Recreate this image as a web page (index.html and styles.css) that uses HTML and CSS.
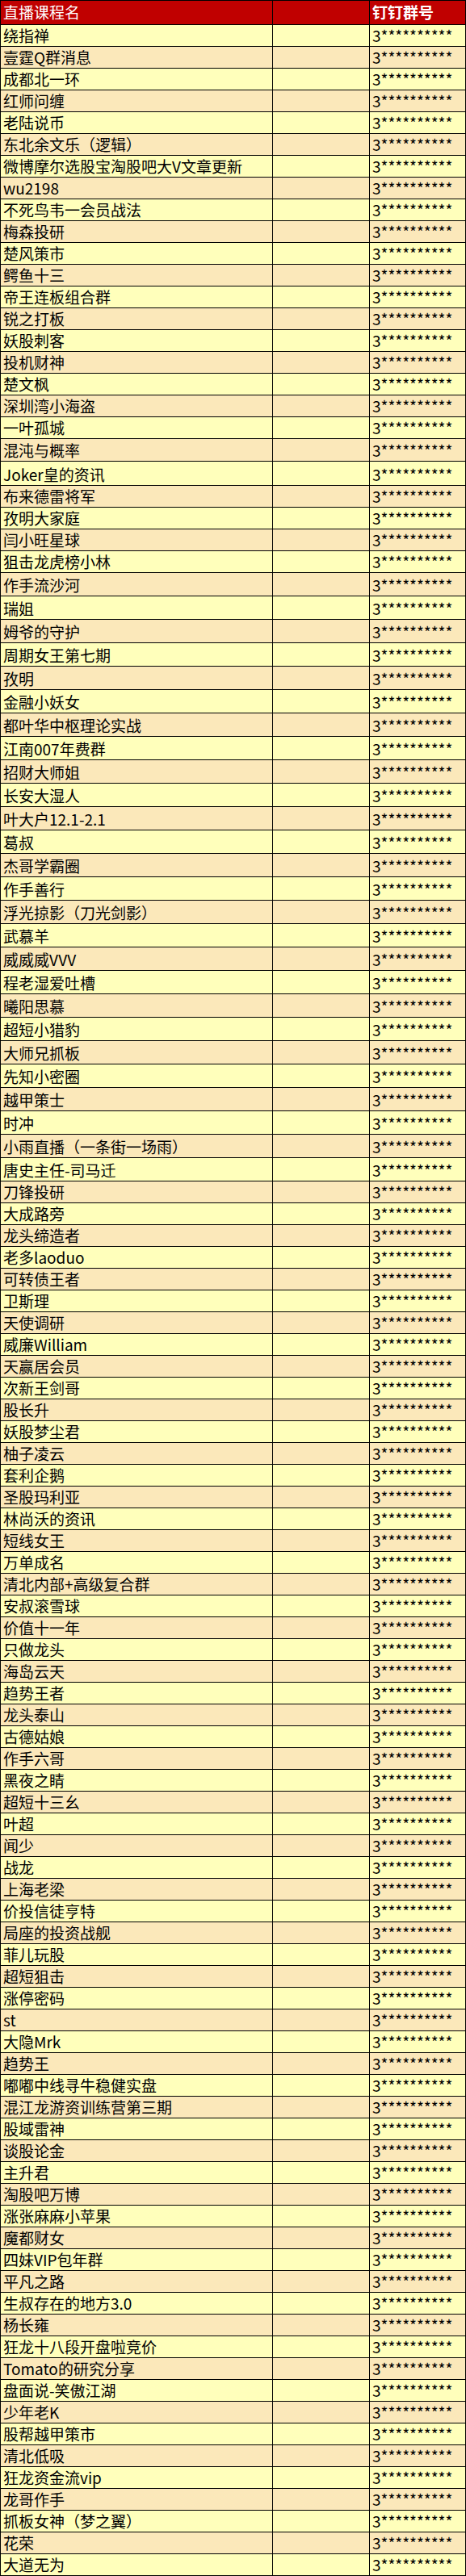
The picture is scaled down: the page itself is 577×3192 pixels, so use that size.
FILE: index.html
```html
<!DOCTYPE html>
<html lang="zh-CN">
<head>
<meta charset="utf-8">
<title>直播课程名</title>
<link rel="stylesheet" href="styles.css">
</head>
<body>
<table class="sheet">
<colgroup><col class="c-name"><col class="c-mid"><col class="c-num"></colgroup>
<thead>
<tr class="head"><th class="h-name">直播课程名</th><th class="h-mid"></th><th class="h-num">钉钉群号</th></tr>
</thead>
<tbody>
<tr><td>绕指禅</td><td></td><td>3**********</td></tr>
<tr><td>壹霆Q群消息</td><td></td><td>3**********</td></tr>
<tr><td>成都北一环</td><td></td><td>3**********</td></tr>
<tr><td>红师问缠</td><td></td><td>3**********</td></tr>
<tr><td>老陆说币</td><td></td><td>3**********</td></tr>
<tr><td>东北余文乐（逻辑）</td><td></td><td>3**********</td></tr>
<tr><td>微博摩尔选股宝淘股吧大V文章更新</td><td></td><td>3**********</td></tr>
<tr><td>wu2198</td><td></td><td>3**********</td></tr>
<tr><td>不死鸟韦一会员战法</td><td></td><td>3**********</td></tr>
<tr><td>梅森投研</td><td></td><td>3**********</td></tr>
<tr><td>楚风策市</td><td></td><td>3**********</td></tr>
<tr><td>鳄鱼十三</td><td></td><td>3**********</td></tr>
<tr><td>帝王连板组合群</td><td></td><td>3**********</td></tr>
<tr><td>锐之打板</td><td></td><td>3**********</td></tr>
<tr><td>妖股刺客</td><td></td><td>3**********</td></tr>
<tr><td>投机财神</td><td></td><td>3**********</td></tr>
<tr><td>楚文枫</td><td></td><td>3**********</td></tr>
<tr><td>深圳湾小海盗</td><td></td><td>3**********</td></tr>
<tr><td>一叶孤城</td><td></td><td>3**********</td></tr>
<tr class="h28"><td>混沌与概率</td><td></td><td>3**********</td></tr>
<tr class="h30"><td>Joker皇的资讯</td><td></td><td>3**********</td></tr>
<tr><td>布来德雷将军</td><td></td><td>3**********</td></tr>
<tr><td>孜明大家庭</td><td></td><td>3**********</td></tr>
<tr><td>闫小旺星球</td><td></td><td>3**********</td></tr>
<tr><td>狙击龙虎榜小林</td><td></td><td>3**********</td></tr>
<tr class="h29"><td>作手流沙河</td><td></td><td>3**********</td></tr>
<tr class="h29"><td>瑞姐</td><td></td><td>3**********</td></tr>
<tr class="h29"><td>姆爷的守护</td><td></td><td>3**********</td></tr>
<tr class="h29"><td>周期女王第七期</td><td></td><td>3**********</td></tr>
<tr class="h29"><td>孜明</td><td></td><td>3**********</td></tr>
<tr class="h29"><td>金融小妖女</td><td></td><td>3**********</td></tr>
<tr class="h29"><td>都叶华中枢理论实战</td><td></td><td>3**********</td></tr>
<tr class="h29"><td>江南007年费群</td><td></td><td>3**********</td></tr>
<tr class="h29"><td>招财大师姐</td><td></td><td>3**********</td></tr>
<tr class="h29"><td>长安大湿人</td><td></td><td>3**********</td></tr>
<tr class="h29"><td>叶大户12.1-2.1</td><td></td><td>3**********</td></tr>
<tr class="h29"><td>葛叔</td><td></td><td>3**********</td></tr>
<tr class="h29"><td>杰哥学霸圈</td><td></td><td>3**********</td></tr>
<tr class="h29"><td>作手善行</td><td></td><td>3**********</td></tr>
<tr class="h29"><td>浮光掠影（刀光剑影）</td><td></td><td>3**********</td></tr>
<tr class="h29"><td>武慕羊</td><td></td><td>3**********</td></tr>
<tr class="h29"><td>威威威VVV</td><td></td><td>3**********</td></tr>
<tr class="h29"><td>程老湿爱吐槽</td><td></td><td>3**********</td></tr>
<tr class="h29"><td>曦阳思慕</td><td></td><td>3**********</td></tr>
<tr class="h29"><td>超短小猎豹</td><td></td><td>3**********</td></tr>
<tr class="h29"><td>大师兄抓板</td><td></td><td>3**********</td></tr>
<tr class="h29"><td>先知小密圈</td><td></td><td>3**********</td></tr>
<tr class="h29"><td>越甲策士</td><td></td><td>3**********</td></tr>
<tr class="h29"><td>时冲</td><td></td><td>3**********</td></tr>
<tr class="h29"><td>小雨直播（一条街一场雨）</td><td></td><td>3**********</td></tr>
<tr class="h29"><td>唐史主任-司马迁</td><td></td><td>3**********</td></tr>
<tr><td>刀锋投研</td><td></td><td>3**********</td></tr>
<tr><td>大成路旁</td><td></td><td>3**********</td></tr>
<tr><td>龙头缔造者</td><td></td><td>3**********</td></tr>
<tr><td>老多laoduo</td><td></td><td>3**********</td></tr>
<tr><td>可转债王者</td><td></td><td>3**********</td></tr>
<tr><td>卫斯理</td><td></td><td>3**********</td></tr>
<tr><td>天使调研</td><td></td><td>3**********</td></tr>
<tr><td>威廉William</td><td></td><td>3**********</td></tr>
<tr><td>天赢居会员</td><td></td><td>3**********</td></tr>
<tr><td>次新王剑哥</td><td></td><td>3**********</td></tr>
<tr><td>股长升</td><td></td><td>3**********</td></tr>
<tr><td>妖股梦尘君</td><td></td><td>3**********</td></tr>
<tr><td>柚子凌云</td><td></td><td>3**********</td></tr>
<tr><td>套利企鹅</td><td></td><td>3**********</td></tr>
<tr><td>圣股玛利亚</td><td></td><td>3**********</td></tr>
<tr><td>林尚沃的资讯</td><td></td><td>3**********</td></tr>
<tr><td>短线女王</td><td></td><td>3**********</td></tr>
<tr><td>万单成名</td><td></td><td>3**********</td></tr>
<tr><td>清北内部+高级复合群</td><td></td><td>3**********</td></tr>
<tr><td>安叔滚雪球</td><td></td><td>3**********</td></tr>
<tr><td>价值十一年</td><td></td><td>3**********</td></tr>
<tr><td>只做龙头</td><td></td><td>3**********</td></tr>
<tr><td>海岛云天</td><td></td><td>3**********</td></tr>
<tr><td>趋势王者</td><td></td><td>3**********</td></tr>
<tr><td>龙头泰山</td><td></td><td>3**********</td></tr>
<tr><td>古德姑娘</td><td></td><td>3**********</td></tr>
<tr><td>作手六哥</td><td></td><td>3**********</td></tr>
<tr><td>黑夜之睛</td><td></td><td>3**********</td></tr>
<tr><td>超短十三幺</td><td></td><td>3**********</td></tr>
<tr><td>叶超</td><td></td><td>3**********</td></tr>
<tr><td>闻少</td><td></td><td>3**********</td></tr>
<tr><td>战龙</td><td></td><td>3**********</td></tr>
<tr><td>上海老梁</td><td></td><td>3**********</td></tr>
<tr><td>价投信徒亨特</td><td></td><td>3**********</td></tr>
<tr><td>局座的投资战舰</td><td></td><td>3**********</td></tr>
<tr><td>菲儿玩股</td><td></td><td>3**********</td></tr>
<tr><td>超短狙击</td><td></td><td>3**********</td></tr>
<tr><td>涨停密码</td><td></td><td>3**********</td></tr>
<tr><td>st</td><td></td><td>3**********</td></tr>
<tr><td>大隐Mrk</td><td></td><td>3**********</td></tr>
<tr><td>趋势王</td><td></td><td>3**********</td></tr>
<tr><td>嘟嘟中线寻牛稳健实盘</td><td></td><td>3**********</td></tr>
<tr><td>混江龙游资训练营第三期</td><td></td><td>3**********</td></tr>
<tr><td>股域雷神</td><td></td><td>3**********</td></tr>
<tr><td>谈股论金</td><td></td><td>3**********</td></tr>
<tr><td>主升君</td><td></td><td>3**********</td></tr>
<tr><td>淘股吧万博</td><td></td><td>3**********</td></tr>
<tr><td>涨张麻麻小苹果</td><td></td><td>3**********</td></tr>
<tr><td>魔都财女</td><td></td><td>3**********</td></tr>
<tr><td>四妹VIP包年群</td><td></td><td>3**********</td></tr>
<tr><td>平凡之路</td><td></td><td>3**********</td></tr>
<tr><td>生叔存在的地方3.0</td><td></td><td>3**********</td></tr>
<tr><td>杨长雍</td><td></td><td>3**********</td></tr>
<tr><td>狂龙十八段开盘啦竞价</td><td></td><td>3**********</td></tr>
<tr><td>Tomato的研究分享</td><td></td><td>3**********</td></tr>
<tr><td>盘面说-笑傲江湖</td><td></td><td>3**********</td></tr>
<tr><td>少年老K</td><td></td><td>3**********</td></tr>
<tr><td>股帮越甲策市</td><td></td><td>3**********</td></tr>
<tr><td>清北低吸</td><td></td><td>3**********</td></tr>
<tr><td>狂龙资金流vip</td><td></td><td>3**********</td></tr>
<tr><td>龙哥作手</td><td></td><td>3**********</td></tr>
<tr><td>抓板女神（梦之翼）</td><td></td><td>3**********</td></tr>
<tr><td>花荣</td><td></td><td>3**********</td></tr>
<tr><td>大道无为</td><td></td><td>3**********</td></tr>
</tbody>
</table>
</body>
</html>
```
FILE: styles.css
```css
html, body {
  margin: 0;
  padding: 0;
  background: #ffffff;
}

.sheet {
  width: 577px;
  table-layout: fixed;
  border-collapse: separate;
  border-spacing: 0;
  border-top: 1px solid #000;
  border-left: 1px solid #000;
  font-family: "Noto Sans CJK SC", "Noto Sans", sans-serif;
  color: #000;
}

.c-name { width: 337px; }
.c-mid { width: 120px; }
.c-num { width: 119px; }

.sheet th,
.sheet td {
  box-sizing: border-box;
  border-right: 1px solid #000;
  border-bottom: 1px solid #000;
  padding: 0 0 2px 3px;
  text-align: left;
  vertical-align: bottom;
  white-space: nowrap;
  overflow: hidden;
  font-size: 19px;
  line-height: 22px;
}

.head { height: 30px; }

.head th {
  background: #c00000;
  color: #ffffff;
  vertical-align: middle;
  padding: 0 0 1px 3px;
  line-height: 26px;
}

.h-name {
  font-size: 21px;
  font-weight: 400;
}

.h-num {
  font-size: 20px;
  font-weight: 700;
}

.sheet tbody tr { height: 27px; }
.sheet tbody tr.h28 { height: 28px; }
.sheet tbody tr.h29 { height: 29px; }
.sheet tbody tr.h30 { height: 30px; }

.sheet tbody tr:nth-child(odd) td { background: #ffffbb; }
.sheet tbody tr:nth-child(even) td { background: #fbe8ba; }
```
